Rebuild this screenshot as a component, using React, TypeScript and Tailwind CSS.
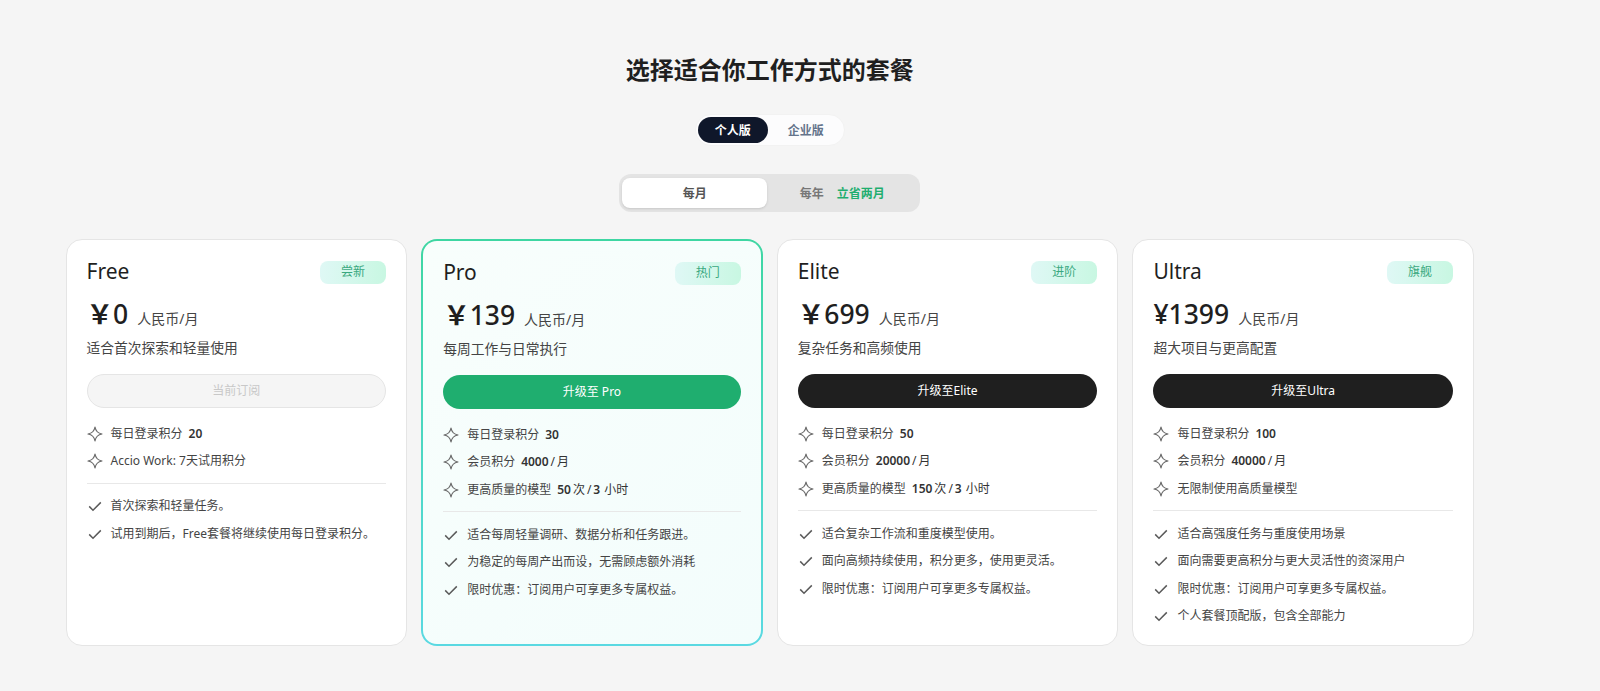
import React from 'react';

type Plan = {
  name: string;
  badge: string;
  currency: string;
  price: string;
  desc: string;
  cta: string;
  variant: 'disabled' | 'green' | 'dark';
  perks: { label: string; value?: React.ReactNode }[];
  checks: string[];
};

const Num = ({ children }: { children: React.ReactNode }) => <b className="font-semibold">{children}</b>;

const perMonth = (n: string) => (
  <>
    <Num>{n}</Num>
    <span>/</span>
    <span>月</span>
  </>
);

const perHours = (n: string) => (
  <>
    <Num>{n}</Num>
    <span>次</span>
    <span>/</span>
    <Num>3</Num>
    <span className="ml-[2px]">小时</span>
  </>
);

const plans: Plan[] = [
  {
    name: 'Free',
    badge: '尝新',
    currency: '\uFFE5',
    price: '0',
    desc: '适合首次探索和轻量使用',
    cta: '当前订阅',
    variant: 'disabled',
    perks: [
      { label: '每日登录积分', value: <Num>20</Num> },
      { label: 'Accio Work: 7天试用积分' },
    ],
    checks: ['首次探索和轻量任务。', '试用到期后，Free套餐将继续使用每日登录积分。'],
  },
  {
    name: 'Pro',
    badge: '热门',
    currency: '\uFFE5',
    price: '139',
    desc: '每周工作与日常执行',
    cta: '升级至 Pro',
    variant: 'green',
    perks: [
      { label: '每日登录积分', value: <Num>30</Num> },
      { label: '会员积分', value: perMonth('4000') },
      { label: '更高质量的模型', value: perHours('50') },
    ],
    checks: ['适合每周轻量调研、数据分析和任务跟进。', '为稳定的每周产出而设，无需顾虑额外消耗', '限时优惠：订阅用户可享更多专属权益。'],
  },
  {
    name: 'Elite',
    badge: '进阶',
    currency: '\uFFE5',
    price: '699',
    desc: '复杂任务和高频使用',
    cta: '升级至Elite',
    variant: 'dark',
    perks: [
      { label: '每日登录积分', value: <Num>50</Num> },
      { label: '会员积分', value: perMonth('20000') },
      { label: '更高质量的模型', value: perHours('150') },
    ],
    checks: ['适合复杂工作流和重度模型使用。', '面向高频持续使用，积分更多，使用更灵活。', '限时优惠：订阅用户可享更多专属权益。'],
  },
  {
    name: 'Ultra',
    badge: '旗舰',
    currency: '\u00A5',
    price: '1399',
    desc: '超大项目与更高配置',
    cta: '升级至Ultra',
    variant: 'dark',
    perks: [
      { label: '每日登录积分', value: <Num>100</Num> },
      { label: '会员积分', value: perMonth('40000') },
      { label: '无限制使用高质量模型' },
    ],
    checks: ['适合高强度任务与重度使用场景', '面向需要更高积分与更大灵活性的资深用户', '限时优惠：订阅用户可享更多专属权益。', '个人套餐顶配版，包含全部能力'],
  },
];

function Sparkle() {
  return (
    <svg width="16" height="16" viewBox="0 0 16 16" fill="none" className="shrink-0">
      <path
        d="M8 1Q9 7 15 8Q9 9 8 15Q7 9 1 8Q7 7 8 1Z"
        stroke="#6b6b6b"
        strokeWidth="1.2"
        strokeLinejoin="round"
      />
    </svg>
  );
}

function Check() {
  return (
    <svg width="16" height="16" viewBox="0 0 16 16" fill="none" className="shrink-0">
      <path d="M2.2 8.4L6 12.2L13.8 4.4" stroke="#5a5a5a" strokeWidth="1.5" />
    </svg>
  );
}

function PlanCard({ plan }: { plan: Plan }) {
  const isPro = plan.variant === 'green';
  const ctaClass =
    plan.variant === 'disabled'
      ? 'bg-[#f5f5f5] border border-[#e5e5e5] text-[#c8c8c8]'
      : plan.variant === 'green'
        ? 'bg-[#1fae6f] text-white'
        : 'bg-[#1f1f1f] text-white';

  return (
    <div
      className={
        isPro
          ? 'rounded-2xl p-5 border-2 border-transparent [background:linear-gradient(135deg,#f8fefc,#f3fdfc)_padding-box,linear-gradient(180deg,#3ed6a2,#5ad9e2)_border-box]'
          : 'rounded-2xl p-5 border border-[#e5e5e5] bg-white'
      }
    >
      <div className="flex items-center justify-between h-[24px]">
        <span className="text-[21px] text-[#1f1f1f]">{plan.name}</span>
        <span className="w-[66px] h-[23px] rounded-lg flex items-center justify-center text-xs text-[#3aa87f] bg-gradient-to-r from-[#dff8f5] to-[#c8f7e2]">
          {plan.badge}
        </span>
      </div>
      <div className="flex items-baseline gap-[9px] mt-[9px] h-[42px]">
        <span className="text-[26.5px] font-medium text-[#1f1f1f] leading-[42px]">
          <span className={plan.currency === '\uFFE5' ? 'font-bold' : ''}>{plan.currency}</span>
          {plan.price}
        </span>
        <span className="text-sm text-[#444]">人民币/月</span>
      </div>
      <p className="text-[13.75px] text-[#444] leading-5 mt-[3px]">{plan.desc}</p>
      <button className={`w-full h-[34px] rounded-full text-xs mt-[16px] ${ctaClass}`}>{plan.cta}</button>
      <ul className="flex flex-col gap-[10.5px] mt-[17px] pb-[13px] border-b border-[#e8e8e8]">
        {plan.perks.map((perk) => (
          <li key={perk.label} className="flex items-center gap-[8px] h-[17px] text-xs text-[#444]">
            <Sparkle />
            <span>{perk.label}</span>
            {perk.value && <span className="flex gap-[2px] -ml-[2px] text-[#333]">{perk.value}</span>}
          </li>
        ))}
      </ul>
      <ul className="flex flex-col gap-[10.5px] mt-[14px]">
        {plan.checks.map((text) => (
          <li key={text} className="flex items-center gap-[8px] h-[17px] text-xs text-[#444]">
            <Check />
            <span>{text}</span>
          </li>
        ))}
      </ul>
    </div>
  );
}

export default function App() {
  return (
    <div className="min-h-screen bg-[#f5f5f5] font-['Noto_Sans','Noto_Sans_CJK_SC',sans-serif]">
      <div className="w-[1540px] pl-[65.5px] pr-[66px] pt-[54px] flex flex-col items-center">
        <h1 className="text-2xl font-bold text-[#1f1f1f] leading-8">选择适合你工作方式的套餐</h1>
        <div className="mt-[28px] h-8 rounded-full bg-[#fcfcfd] border border-[#f2f2f2] flex items-center px-[2px] gap-[2px]">
          <button className="w-[70px] h-[26px] pt-[1px] rounded-full bg-[#0f172a] text-white text-xs font-bold">个人版</button>
          <button className="w-[72px] h-[26px] pt-[1px] rounded-full text-[#64748b] text-xs font-bold">企业版</button>
        </div>
        <div className="mt-[28px] w-[301px] h-[38px] rounded-xl bg-[#e4e4e4] flex items-center px-[3px]">
          <button className="w-[145px] h-[30px] pt-[1px] rounded-lg bg-white shadow-sm text-xs font-bold text-[#555]">每月</button>
          <div className="flex-1 flex items-center justify-center gap-[13px] pt-[1px] text-xs font-bold">
            <span className="text-[#777]">每年</span>
            <span className="text-[#1fae6f]">立省两月</span>
          </div>
        </div>
        <div className="mt-[27px] w-full grid grid-cols-4 gap-[14px]">
          {plans.map((plan) => (
            <PlanCard key={plan.name} plan={plan} />
          ))}
        </div>
      </div>
    </div>
  );
}
